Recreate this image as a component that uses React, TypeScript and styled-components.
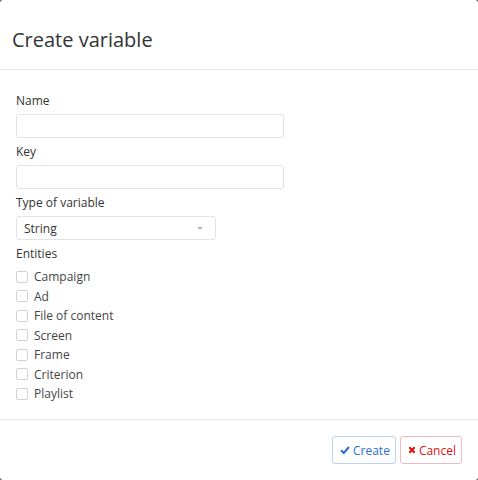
import React, { useState } from 'react';
import styled, { createGlobalStyle } from 'styled-components';

const entities = ['Campaign', 'Ad', 'File of content', 'Screen', 'Frame', 'Criterion', 'Playlist'];

export default function App() {
  const [checked, setChecked] = useState<string[]>([]);

  const toggle = (name: string) => {
    setChecked((prev) => (prev.includes(name) ? prev.filter((n) => n !== name) : [...prev, name]));
  };

  return (
    <>
      <GlobalStyle />
      <Modal>
        <Header>
          <Title>Create variable</Title>
        </Header>
        <Body>
          <Field>
            <Label>Name</Label>
            <Input />
          </Field>
          <Field>
            <Label>Key</Label>
            <Input />
          </Field>
          <Field>
            <Label>Type of variable</Label>
            <Select>
              <span>String</span>
              <Caret />
            </Select>
          </Field>
          <Label>Entities</Label>
          <CheckList>
            {entities.map((name) => (
              <CheckRow key={name} onClick={() => toggle(name)}>
                <Box $checked={checked.includes(name)} />
                <span>{name}</span>
              </CheckRow>
            ))}
          </CheckList>
        </Body>
        <Footer>
          <Button $variant="primary">
            <svg width="10" height="10" viewBox="0 0 10 10">
              <path d="M1 5.2 L3.8 8 L9 2" fill="none" stroke="currentColor" strokeWidth="2" />
            </svg>
            Create
          </Button>
          <Button $variant="danger">
            <svg width="8" height="8" viewBox="0 0 9 9">
              <path d="M1.5 1.5 L7.5 7.5 M7.5 1.5 L1.5 7.5" fill="none" stroke="currentColor" strokeWidth="2.4" />
            </svg>
            Cancel
          </Button>
        </Footer>
      </Modal>
    </>
  );
}

const GlobalStyle = createGlobalStyle`
  html, body {
    margin: 0;
    padding: 0;
    background: #4a4a4a;
  }
  body {
    font-family: "Open Sans", "Liberation Sans", sans-serif;
    color: #333;
  }
`;

const Modal = styled.div`
  width: 478px;
  height: 480px;
  background: #ffffff;
  border-radius: 3px;
  display: flex;
  flex-direction: column;
`;

const Header = styled.div`
  padding: 26px 12px 15px;
  border-bottom: 1px solid #e5e5e5;
`;

const Title = styled.h4`
  margin: 0;
  font-size: 20px;
  line-height: 28px;
  font-weight: 400;
  color: #333;
`;

const Body = styled.div`
  flex: 1;
  padding: 22px 16px 0;
`;

const Field = styled.div`
  display: flex;
  flex-direction: column;
  margin-bottom: 5px;
`;

const Label = styled.label`
  display: block;
  font-size: 12px;
  line-height: 17px;
  color: #333;
  margin-bottom: 5px;
`;

const Input = styled.input`
  box-sizing: border-box;
  width: 268px;
  height: 24px;
  border: 1px solid #dfe4ea;
  border-radius: 3px;
  padding: 0 7px;
  font-family: inherit;
  font-size: 12px;
  outline: none;
`;

const Select = styled.div`
  box-sizing: border-box;
  width: 200px;
  height: 24px;
  border: 1px solid #dfe4ea;
  border-radius: 3px;
  padding: 0 7px;
  display: flex;
  align-items: center;
  justify-content: space-between;
  font-size: 12px;
  color: #333;
`;

const Caret = styled.span`
  width: 0;
  height: 0;
  margin-right: 5px;
  border-left: 3px solid transparent;
  border-right: 3px solid transparent;
  border-top: 3px solid #b8b8b8;
`;

const CheckList = styled.div`
  display: flex;
  flex-direction: column;
  margin-top: 2px;
`;

const CheckRow = styled.div`
  display: flex;
  align-items: center;
  gap: 6px;
  height: 19.5px;
  font-size: 12px;
  color: #444;
  cursor: pointer;
`;

const Box = styled.span<{ $checked: boolean }>`
  box-sizing: border-box;
  width: 12px;
  height: 12px;
  border: 1px solid #cfd3d8;
  border-radius: 2px;
  background: ${(p) => (p.$checked ? '#3a7fd5' : '#fff')};
`;

const Footer = styled.div`
  border-top: 1px solid #e5e5e5;
  padding: 16px;
  display: flex;
  justify-content: flex-end;
  gap: 4px;
`;

const Button = styled.button<{ $variant: 'primary' | 'danger' }>`
  display: flex;
  align-items: center;
  gap: 3px;
  height: 28px;
  padding: 0 5px 0 7px;
  background: #fff;
  border-radius: 3px;
  font-family: inherit;
  font-size: 12px;
  cursor: pointer;
  border: 1px solid ${(p) => (p.$variant === 'primary' ? '#bcd3ef' : '#f1b9bd')};
  color: ${(p) => (p.$variant === 'primary' ? '#2b6fce' : '#d11')};
`;
